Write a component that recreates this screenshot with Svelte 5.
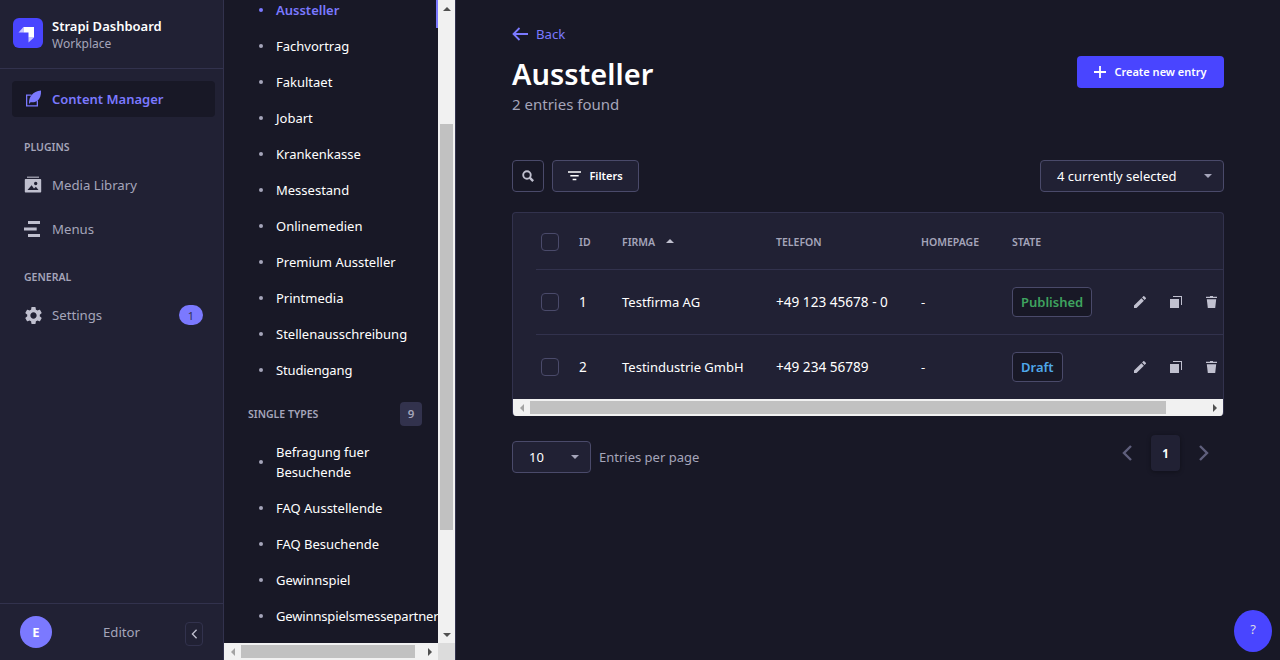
<script>
  const collections = ['Fachvortrag', 'Fakultaet', 'Jobart', 'Krankenkasse', 'Messestand', 'Onlinemedien', 'Premium Aussteller', 'Printmedia', 'Stellenausschreibung', 'Studiengang'];
  const singles = ['FAQ Ausstellende', 'FAQ Besuchende', 'Gewinnspiel', 'Gewinnspielsmessepartner'];
  const rows = [
    { id: 1, firma: 'Testfirma AG', telefon: '+49 123 45678 - 0', state: 'Published' },
    { id: 2, firma: 'Testindustrie GmbH', telefon: '+49 234 56789', state: 'Draft' }
  ];
</script>

<div class="layout">
  <nav class="mainnav">
    <header class="brand">
      <div class="logo">
        <svg viewBox="0 0 30 30" width="30" height="30">
          <path d="M10.500 9h10.500v10.500h-5.500v-5h-5z" fill="#fff" />
          <path d="M10.500 9v5.500H5.500z" fill="#fff" opacity="0.7" />
          <path d="M15.500 19.500H21L15.500 24.500z" fill="#fff" opacity="0.7" />
        </svg>
      </div>
      <div class="brand-text">
        <strong>Strapi Dashboard</strong>
        <span>Workplace</span>
      </div>
    </header>

    <div class="navbody">
      <a class="navlink active">
        <svg viewBox="0 0 18 18" width="18" height="18" fill="#7b79ff">
          <path d="M2 4.500h5.500v1.300H3.300v9.400h9.400V10.500H14v6H2z" />
          <path d="M5 13.500C4.800 7 8.500 1.500 17 .5c.3 4.500-1 8.500-4 10.500-2 1.300-4.500 1.500-6.300 1L5.800 13.500z" />
        </svg>
        <span>Content Manager</span>
      </a>
      <p class="navhead plugins">PLUGINS</p>
      <a class="navlink">
        <svg viewBox="0 0 18 18" width="18" height="18" fill="#c0c0cf">
          <path d="M3 0.500h12v1.500H3z" opacity="0.7" />
          <path fill-rule="evenodd" d="M1.800 3h14.400c0.600 0 1 0.400 1 1v11.500c0 0.600-0.400 1-1 1H1.800c-0.600 0-1-0.400-1-1V4c0-0.600 0.400-1 1-1zM11.700 5.800a1.700 1.700 0 1 0 0 3.400 1.700 1.700 0 0 0 0-3.400zM3.500 14h11l-2.600-3.200-1.900 1.600-2.400-3.200z" />
        </svg>
        <span>Media Library</span>
      </a>
      <a class="navlink">
        <svg viewBox="0 0 18 18" width="18" height="18" fill="#c0c0cf">
          <path d="M4 1h12v3H4zM0 7.500h12.700v3H0zM4 14h12v3H4z" />
        </svg>
        <span>Menus</span>
      </a>
      <p class="navhead general">GENERAL</p>
      <a class="navlink">
        <svg viewBox="0 0 24 24" width="21" height="21" fill="#c0c0cf" class="gear">
          <path d="M19.140 12.940c.04-.3.06-.61.06-.94 0-.32-.02-.64-.07-.94l2.030-1.580a.49.49 0 0 0 .12-.61l-1.920-3.320a.488.488 0 0 0-.59-.22l-2.390.96c-.5-.38-1.030-.7-1.620-.94l-.36-2.540a.484.484 0 0 0-.48-.41h-3.840c-.24 0-.43.17-.47.41l-.36 2.540c-.59.24-1.130.57-1.620.94l-2.390-.96c-.22-.08-.47 0-.59.22L2.740 8.870c-.12.21-.08.47.12.61l2.030 1.580c-.05.3-.09.63-.09.94s.02.64.07.94l-2.030 1.580a.49.49 0 0 0-.12.61l1.920 3.320c.12.22.37.29.59.22l2.390-.96c.5.38 1.030.7 1.620.94l.36 2.540c.05.24.24.41.48.41h3.840c.24 0 .44-.17.47-.41l.36-2.540c.59-.24 1.130-.56 1.620-.94l2.390.96c.22.08.47 0 .59-.22l1.920-3.320c.12-.22.07-.47-.12-.61l-2.010-1.580zM12 15.600c-1.980 0-3.600-1.620-3.600-3.600s1.620-3.600 3.600-3.600 3.600 1.620 3.600 3.600-1.620 3.600-3.600 3.600z" />
        </svg>
        <span>Settings</span>
        <b class="pill">1</b>
      </a>
    </div>

    <footer class="navfoot">
      <div class="avatar">E</div>
      <span class="role">Editor</span>
      <button class="collapse" aria-label="Collapse">
        <svg viewBox="0 0 8 12" width="7" height="10" fill="none" stroke="#c0c0cf" stroke-width="1.600">
          <path d="M6.500 1L1.500 6l5 5" />
        </svg>
      </button>
    </footer>
  </nav>

  <aside class="subnav">
    <div class="sublist">
      <ul>
        <li class="current">Aussteller</li>
        {#each collections as name}
          <li>{name}</li>
        {/each}
      </ul>
      <div class="subhead">
        <span>SINGLE TYPES</span>
        <b>9</b>
      </div>
      <ul>
        <li class="tall">Befragung fuer<br />Besuchende</li>
        {#each singles as name}
          <li>{name}</li>
        {/each}
      </ul>
    </div>
    <div class="vbar">
      <i class="arrow up"></i>
      <div class="vtrack"><div class="vthumb"></div></div>
      <i class="arrow down"></i>
    </div>
    <div class="hbar">
      <i class="arrow left dim"></i>
      <div class="htrack sub"><div class="hthumb"></div></div>
      <i class="arrow right"></i>
    </div>
    <div class="corner"></div>
  </aside>

  <main>
    <a class="back">
      <svg viewBox="0 0 16 14" width="16" height="14" fill="none" stroke="#7b79ff" stroke-width="1.800">
        <path d="M16 7H1.500M7.500 1L1.500 7l6 6" />
      </svg>
      Back
    </a>
    <div class="titlebar">
      <div>
        <h1>Aussteller</h1>
        <p class="count">2 entries found</p>
      </div>
      <button class="create">
        <svg viewBox="0 0 12 12" width="12" height="12" fill="#fff"><path d="M5.100 0h1.800v5.100H12v1.800H6.900V12H5.100V6.900H0V5.100h5.100z" /></svg>
        Create new entry
      </button>
    </div>

    <div class="toolbar">
      <button class="iconbtn" aria-label="Search">
        <svg viewBox="0 0 14 14" width="12" height="12" fill="none" stroke="#c0c0cf" stroke-width="2.200">
          <circle cx="5.800" cy="5.800" r="4.400" /><path d="M9 9l4 4" stroke-width="2.800" />
        </svg>
      </button>
      <button class="filters">
        <svg viewBox="0 0 14 10" width="13" height="10" fill="#fff"><path d="M0 0h14v1.500H0zM2.500 4h9v1.500h-9zM5 8h4v1.500H5z" /></svg>
        Filters
      </button>
      <div class="select fields">
        <span>4 currently selected</span>
        <i class="caret"></i>
      </div>
    </div>

    <div class="tablecard">
      <table>
        <thead>
          <tr>
            <th class="c-check"><span class="box"></span></th>
            <th class="c-id">ID</th>
            <th class="c-firma">FIRMA <i class="sort"></i></th>
            <th class="c-tel">TELEFON</th>
            <th class="c-home">HOMEPAGE</th>
            <th class="c-state">STATE</th>
            <th></th>
          </tr>
        </thead>
        <tbody>
          {#each rows as row}
            <tr>
              <td><span class="box"></span></td>
              <td class="num">{row.id}</td>
              <td>{row.firma}</td>
              <td class="num">{row.telefon}</td>
              <td>-</td>
              <td><span class="badge" class:green={row.state === 'Published'}>{row.state}</span></td>
              <td>
                <div class="actions">
                  <svg viewBox="3 3 18 18" width="12" height="12" fill="#c0c0cf">
                    <path d="M3 17.250V21h3.750L17.810 9.940l-3.750-3.750L3 17.250zM20.710 7.040a1 1 0 0 0 0-1.410l-2.340-2.340a1 1 0 0 0-1.410 0l-1.830 1.830 3.750 3.750 1.830-1.830z" />
                  </svg>
                  <svg viewBox="0 0 12 12" width="12" height="12" fill="#c0c0cf">
                    <path d="M0 3h9v9H0z" />
                    <path d="M3 0h9v9h-1V1H3z" />
                  </svg>
                  <svg viewBox="0 0 11 12" width="11" height="12" fill="#c0c0cf">
                    <path d="M4 0h3v0.800h4v1.200H0V0.800h4zM0.800 3.200h9.400L9.200 12H1.800z" />
                  </svg>
                </div>
              </td>
            </tr>
          {/each}
        </tbody>
      </table>
      <div class="hbar tablebar">
        <i class="arrow left dim"></i>
        <div class="htrack table"><div class="hthumb"></div></div>
        <i class="arrow right"></i>
      </div>
    </div>

    <div class="pager">
      <div class="select perpage">
        <span>10</span>
        <i class="caret"></i>
      </div>
      <span class="perlabel">Entries per page</span>
      <div class="pages">
        <svg viewBox="0 0 10 16" width="10" height="16" fill="none" stroke="#5f5f7c" stroke-width="2.400"><path d="M9 1L2 8l7 7" /></svg>
        <span class="page">1</span>
        <svg viewBox="0 0 10 16" width="10" height="16" fill="none" stroke="#5f5f7c" stroke-width="2.400"><path d="M1 1l7 7-7 7" /></svg>
      </div>
    </div>
  </main>

  <button class="help">?</button>
</div>

<style>
  :global(body) {
    margin: 0;
    background: #181826;
  }

  .layout {
    display: flex;
    height: 660px;
    overflow: hidden;
    font-family: "Noto Sans", "Open Sans", sans-serif;
    font-size: 13px;
    color: #fff;
  }

  /* left navigation */
  .mainnav {
    width: 224px;
    flex: none;
    box-sizing: border-box;
    display: flex;
    flex-direction: column;
    background: #212134;
    border-right: 1px solid #32324d;
  }

  .brand {
    height: 69px;
    box-sizing: border-box;
    display: flex;
    align-items: flex-start;
    gap: 9px;
    padding: 18px 0 0 13px;
    border-bottom: 1px solid #32324d;
  }

  .logo {
    width: 30px;
    height: 30px;
    border-radius: 6px;
    background: #4945ff;
  }

  .logo svg {
    display: block;
  }

  .brand-text {
    display: flex;
    flex-direction: column;
    line-height: 18px;
    margin-top: -1px;
  }

  .brand-text strong {
    font-size: 13px;
    font-weight: 600;
  }

  .brand-text span {
    font-size: 12px;
    color: #a5a5ba;
  }

  .navbody {
    flex: 1;
    padding: 12px 8px 0 12px;
  }

  .navlink {
    display: flex;
    align-items: center;
    gap: 10px;
    height: 36px;
    padding: 0 12px;
    color: #a5a5ba;
    font-size: 13.200px;
    border-radius: 4px;
    margin-bottom: 8px;
  }

  .navlink.active {
    background: #181826;
    color: #7b79ff;
    font-weight: 600;
    font-size: 13px;
  }

  .gear {
    margin: 0 -1.500px;
  }

  .pill {
    margin-left: auto;
    width: 24px;
    height: 20px;
    border-radius: 10px;
    background: #7b79ff;
    color: #32324d;
    font-size: 11px;
    font-weight: 400;
    display: flex;
    align-items: center;
    justify-content: center;
  }

  .navhead {
    margin: 0;
    height: 16px;
    line-height: 16px;
    padding-left: 12px;
    font-size: 10.500px;
    font-weight: 600;
    color: #a5a5ba;
  }

  .plugins {
    margin-top: 22px;
    margin-bottom: 12px;
  }

  .general {
    margin-top: 22px;
    margin-bottom: 12px;
  }

  .navfoot {
    height: 57px;
    box-sizing: border-box;
    display: flex;
    align-items: center;
    border-top: 1px solid #32324d;
    padding: 0 20px;
    position: relative;
  }

  .avatar {
    width: 32px;
    height: 32px;
    border-radius: 50%;
    background: #7b79ff;
    display: flex;
    align-items: center;
    justify-content: center;
    font-size: 13px;
    font-weight: 700;
  }

  .role {
    margin-left: 51px;
    color: #a5a5ba;
    font-size: 13.200px;
  }

  .collapse {
    position: absolute;
    left: 185px;
    top: 18px;
    width: 18px;
    height: 24px;
    padding: 0;
    box-sizing: border-box;
    background: #212134;
    border: 1px solid #32324d;
    border-radius: 4px;
    display: flex;
    align-items: center;
    justify-content: center;
  }

  /* content type list */
  .subnav {
    width: 232px;
    flex: none;
    box-sizing: border-box;
    display: grid;
    grid-template-columns: 214px 17px;
    grid-template-rows: 643px 17px;
    border-right: 1px solid #32324d;
    background: #181826;
  }

  .sublist {
    overflow: hidden;
    white-space: nowrap;
  }

  .sublist ul {
    list-style: none;
    margin: 0;
    padding: 0;
  }

  .sublist ul:first-child {
    margin-top: -8px;
  }

  .sublist li {
    position: relative;
    height: 36px;
    line-height: 36px;
    padding-left: 52px;
    font-size: 13px;
  }

  .sublist li:last-child {
    letter-spacing: -0.15px;
  }

  .sublist li::before {
    content: '';
    position: absolute;
    left: 35px;
    top: 16px;
    width: 4px;
    height: 4px;
    border-radius: 50%;
    background: #a5a5ba;
  }

  .sublist li.current {
    color: #7b79ff;
    font-weight: 600;
    border-right: 2px solid #7b79ff;
  }

  .sublist li.current::before {
    background: #7b79ff;
  }

  .sublist li.tall {
    height: 53px;
    line-height: 20px;
    padding-top: 5px;
    box-sizing: border-box;
  }

  .sublist li.tall::before {
    top: 23px;
  }

  .subhead {
    height: 47px;
    margin-top: 2px;
    padding: 0 16px 0 24px;
    display: flex;
    align-items: center;
    justify-content: space-between;
    font-size: 10.500px;
    font-weight: 600;
    color: #a5a5ba;
    box-sizing: border-box;
  }

  .subhead b {
    width: 22px;
    height: 24px;
    border-radius: 4px;
    background: #32324d;
    font-size: 11.500px;
    font-weight: 600;
    display: flex;
    align-items: center;
    justify-content: center;
  }

  /* classic scrollbars, drawn by hand */
  .vbar {
    background: #f1f1f1;
    display: flex;
    flex-direction: column;
  }

  .vtrack {
    flex: 1;
    padding: 107px 2px 96px;
    display: flex;
    flex-direction: column;
  }

  .vthumb {
    flex: 1;
    background: #c1c1c1;
  }

  .hbar {
    background: #f1f1f1;
    display: flex;
    align-items: center;
  }

  .htrack {
    flex: 1;
    height: 100%;
    box-sizing: border-box;
    padding: 2px 0;
  }

  .hthumb {
    height: 100%;
    background: #c1c1c1;
  }

  .htrack.sub .hthumb {
    width: 174px;
  }

  .corner {
    background: #dcdcdc;
  }

  .arrow {
    flex: none;
    display: block;
    width: 17px;
    height: 17px;
    position: relative;
  }

  .arrow::after {
    content: '';
    position: absolute;
    left: 50%;
    top: 50%;
    transform: translate(-50%, -50%);
    border: 4px solid transparent;
  }

  .arrow.up::after {
    border-bottom-color: #505050;
    border-top-width: 0;
  }

  .arrow.down::after {
    border-top-color: #505050;
    border-bottom-width: 0;
  }

  .arrow.left::after {
    border-right-color: #505050;
    border-left-width: 0;
  }

  .arrow.right::after {
    border-left-color: #505050;
    border-right-width: 0;
  }

  .arrow.dim::after {
    border-right-color: #a3a3a3;
  }

  /* main content */
  main {
    flex: 1;
    box-sizing: border-box;
    padding: 24px 56px 0 56px;
    min-width: 0;
  }

  .back {
    display: flex;
    align-items: center;
    gap: 8px;
    height: 20px;
    color: #7b79ff;
    font-size: 13.200px;
  }

  .titlebar {
    display: flex;
    justify-content: space-between;
    align-items: flex-start;
    margin-top: 8px;
    height: 108px;
  }

  h1 {
    margin: 0;
    font-size: 29px;
    font-weight: 600;
    line-height: 44px;
  }

  .count {
    margin: -2px 0 0;
    color: #a5a5ba;
    font-size: 15px;
    line-height: 20px;
  }

  button {
    font-family: inherit;
    cursor: pointer;
  }

  .create {
    width: 147px;
    height: 32px;
    margin-top: 4px;
    padding: 0 0 1px;
    border: 0;
    border-radius: 4px;
    background: #4945ff;
    color: #fff;
    font-size: 11px;
    font-weight: 600;
    display: flex;
    align-items: center;
    justify-content: center;
    gap: 8px;
  }

  .toolbar {
    display: flex;
    align-items: center;
    gap: 8px;
    height: 32px;
  }

  .iconbtn {
    width: 32px;
    height: 32px;
    padding: 0;
    background: #181826;
    border: 1px solid #4a4a6a;
    border-radius: 4px;
    display: flex;
    align-items: center;
    justify-content: center;
  }

  .filters {
    width: 87px;
    height: 32px;
    padding: 0 0 1px;
    background: #212134;
    border: 1px solid #4a4a6a;
    border-radius: 4px;
    color: #fff;
    font-size: 11px;
    font-weight: 600;
    display: flex;
    align-items: center;
    justify-content: center;
    gap: 8px;
  }

  .select {
    box-sizing: border-box;
    height: 32px;
    display: flex;
    align-items: center;
    justify-content: space-between;
    background: #212134;
    border: 1px solid #4a4a6a;
    border-radius: 4px;
    font-size: 13px;
  }

  .fields {
    width: 184px;
    margin-left: auto;
    padding: 0 11px 0 16px;
  }

  .caret {
    width: 0;
    height: 0;
    border: 4px solid transparent;
    border-top-color: #a5a5ba;
    border-bottom-width: 0;
  }

  .tablecard {
    margin-top: 20px;
    height: 204px;
    box-sizing: border-box;
    background: #212134;
    border: 1px solid #32324d;
    border-bottom: 0;
    border-radius: 4px;
    overflow: hidden;
    display: flex;
    flex-direction: column;
  }

  table {
    margin-left: 23px;
    border-collapse: collapse;
    table-layout: fixed;
    width: 688px;
    height: 186px;
    font-size: 13px;
  }

  th {
    height: 56px;
    padding: 2px 0 0;
    box-sizing: border-box;
    text-align: left;
    font-size: 10.500px;
    font-weight: 600;
    color: #a5a5ba;
  }

  td {
    padding: 0;
    height: 64px;
    border-top: 1px solid #32324d;
  }

  td.num {
    font-size: 13.600px;
  }

  th.c-check,
  td:first-child {
    width: 43px;
    padding-left: 5px;
    box-sizing: border-box;
  }

  .c-id {
    width: 43px;
  }

  .c-firma {
    width: 154px;
  }

  .c-tel {
    width: 145px;
  }

  .c-home {
    width: 91px;
  }

  .c-state {
    width: 122px;
  }

  .box {
    display: block;
    box-sizing: border-box;
    width: 18px;
    height: 18px;
    border: 1px solid #4a4a6a;
    border-radius: 4px;
    background: #212134;
  }

  .sort {
    display: inline-block;
    margin-left: 8px;
    vertical-align: 3px;
    border: 4px solid transparent;
    border-bottom-color: #c0c0cf;
    border-top-width: 0;
  }

  .badge {
    display: inline-block;
    box-sizing: border-box;
    height: 30px;
    line-height: 28px;
    padding: 0 8px;
    background: #181826;
    border: 1px solid #4a4a6a;
    border-radius: 4px;
    font-weight: 600;
    color: #4fa8ea;
  }

  .badge.green {
    color: #3fa35f;
  }

  .actions {
    display: flex;
    align-items: center;
    gap: 24px;
  }

  .tablebar {
    height: 17px;
  }

  .htrack.table .hthumb {
    width: 636px;
  }

  .pager {
    display: flex;
    align-items: center;
    margin-top: 25px;
    height: 32px;
  }

  .perpage {
    width: 79px;
    padding: 0 11px 0 16px;
  }

  .perlabel {
    margin-left: 8px;
    color: #a5a5ba;
    font-size: 13px;
  }

  .pages {
    margin-left: auto;
    margin-top: -8px;
    margin-right: 15px;
    display: flex;
    align-items: center;
    gap: 19px;
  }

  .page {
    width: 29px;
    height: 36px;
    border-radius: 4px;
    background: #212134;
    box-shadow: 0 1px 4px rgba(3, 3, 5, 0.35);
    display: flex;
    align-items: center;
    justify-content: center;
    font-size: 11.500px;
    font-weight: 700;
  }

  .help {
    position: absolute;
    left: 1234px;
    top: 610px;
    width: 38px;
    height: 42px;
    padding: 0 0 4px;
    border: 0;
    border-radius: 50%;
    background: #4945ff;
    color: #dcdce4;
    font-size: 13px;
  }
</style>
